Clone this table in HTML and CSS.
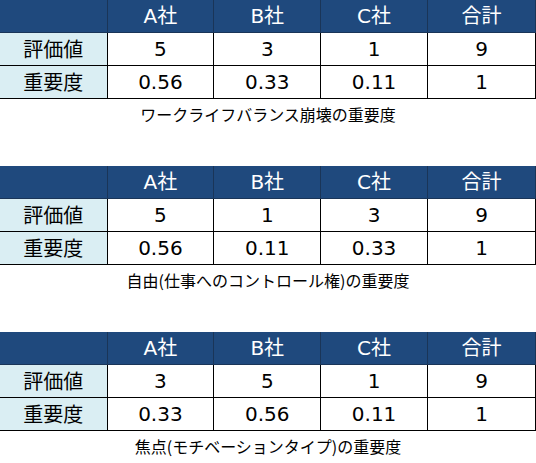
FILE: index.html
```html
<!DOCTYPE html>
<html lang="ja">
<head>
<meta charset="utf-8">
<link rel="stylesheet" href="styles.css">
</head>
<body>
<main class="page">
  <section class="block">
    <table class="score">
      <colgroup><col class="c-label"><col><col><col><col class="c-last"></colgroup>
      <tr class="head"><th></th><th>A社</th><th>B社</th><th>C社</th><th>合計</th></tr>
      <tr><th class="label">評価値</th><td>5</td><td>3</td><td>1</td><td>9</td></tr>
      <tr><th class="label">重要度</th><td>0.56</td><td>0.33</td><td>0.11</td><td>1</td></tr>
    </table>
    <p class="caption">ワークライフバランス崩壊の重要度</p>
  </section>
  <section class="block">
    <table class="score">
      <colgroup><col class="c-label"><col><col><col><col class="c-last"></colgroup>
      <tr class="head"><th></th><th>A社</th><th>B社</th><th>C社</th><th>合計</th></tr>
      <tr><th class="label">評価値</th><td>5</td><td>1</td><td>3</td><td>9</td></tr>
      <tr><th class="label">重要度</th><td>0.56</td><td>0.11</td><td>0.33</td><td>1</td></tr>
    </table>
    <p class="caption">自由(仕事へのコントロール権)の重要度</p>
  </section>
  <section class="block">
    <table class="score">
      <colgroup><col class="c-label"><col><col><col><col class="c-last"></colgroup>
      <tr class="head"><th></th><th>A社</th><th>B社</th><th>C社</th><th>合計</th></tr>
      <tr><th class="label">評価値</th><td>3</td><td>5</td><td>1</td><td>9</td></tr>
      <tr><th class="label">重要度</th><td>0.33</td><td>0.56</td><td>0.11</td><td>1</td></tr>
    </table>
    <p class="caption">焦点(モチベーションタイプ)の重要度</p>
  </section>
</main>
</body>
</html>
```

FILE: styles.css
```css
html, body {
  margin: 0;
  padding: 0;
  background: #ffffff;
}

.page {
  display: flex;
  flex-direction: column;
  gap: 38px;
  font-family: "DejaVu Sans", "Noto Sans CJK JP", sans-serif;
  color: #000;
}

.block {
  display: flex;
  flex-direction: column;
  align-items: stretch;
}

.score {
  width: 536px;
  table-layout: fixed;
  border-collapse: collapse;
  font-size: 20px;
}

.c-label { width: 107px; }
.c-last { width: 108px; }

.score th,
.score td {
  height: 32px;
  padding: 0;
  text-align: center;
  vertical-align: middle;
  font-weight: normal;
  line-height: 1;
  border-right: 1px solid #000;
  border-bottom: 1px solid #000;
}

.head th {
  background: #1f497d;
  color: #ffffff;
  border-right-color: #1a3558;
  border-bottom-color: #1a3558;
}

.score .label {
  background: #daeef3;
  font-family: "Noto Sans CJK JP", sans-serif;
}

.caption {
  margin: 0;
  height: 28px;
  display: flex;
  align-items: center;
  justify-content: center;
  font-family: "Noto Sans CJK JP", sans-serif;
  font-size: 16px;
  padding-top: 1px;
}
```
